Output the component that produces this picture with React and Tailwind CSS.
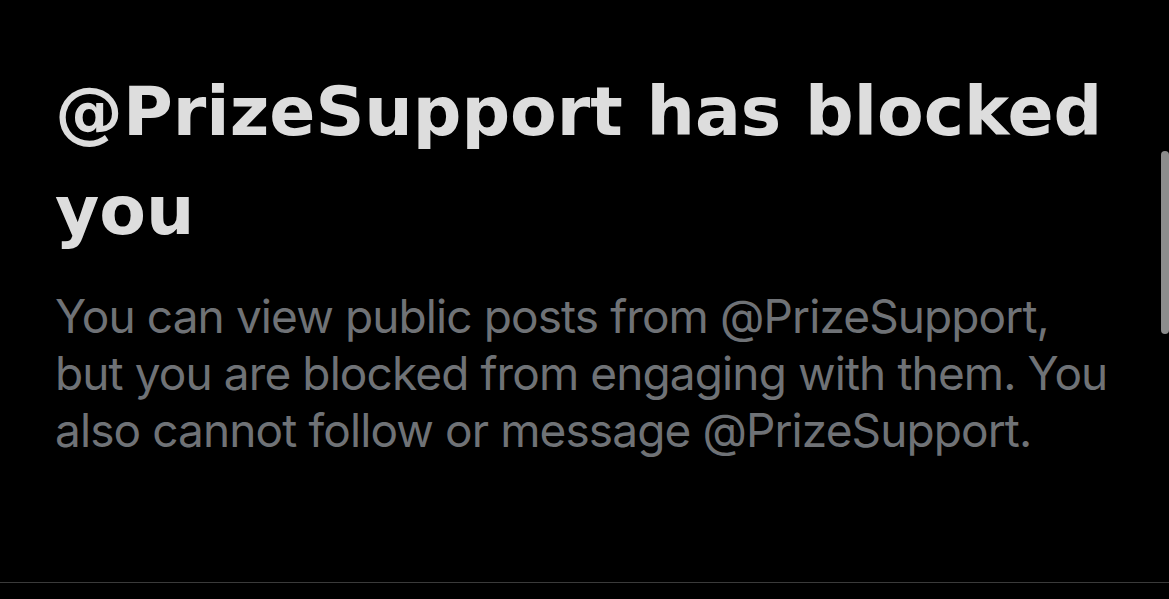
export default function App() {
  return (
    <div className="relative w-[1169px] h-[599px] bg-black overflow-hidden" style={{ fontFamily: 'Inter, "Liberation Sans", Arial, sans-serif' }}>
      <div className="pl-[55px] pr-[40px] pt-[62px]">
        <h1
          className="text-[68px] leading-[99px] font-bold text-[#dddddd]"
          style={{ fontFamily: '"DejaVu Sans", Inter, sans-serif' }}
        >
          @PrizeSupport has blocked<br />you
        </h1>
        <p className="mt-[28px] text-[46px] leading-[57px] text-[#6f7276] tracking-[-0.9px]">
          You can view public posts from @PrizeSupport,<br />
          but you are blocked from engaging with them. You<br />
          also cannot follow or message @PrizeSupport.
        </p>
      </div>

      {/* scrollbar thumb */}
      <div className="absolute right-0 top-[151px] w-[8px] h-[183px] rounded-full bg-[#8c8c8c]" />

      <div className="absolute left-0 right-0 top-[582px] h-px bg-[#3a3a3a]" />
    </div>
  )
}
